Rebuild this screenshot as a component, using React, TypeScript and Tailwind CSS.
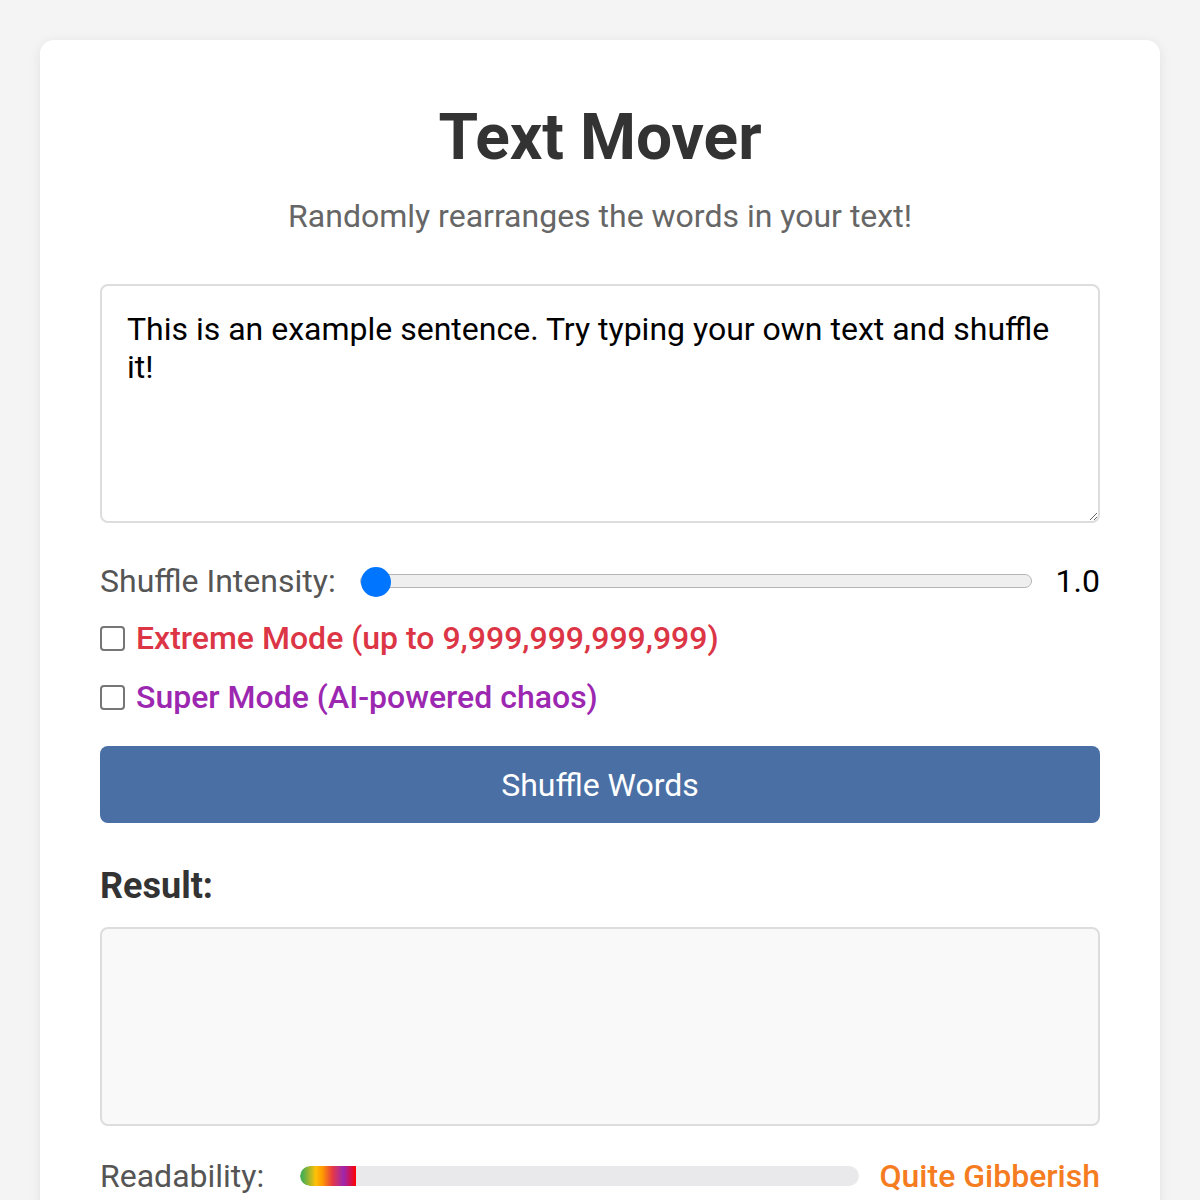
export default function App() {
  return (
    <div
      className="min-h-[1200px] bg-[#f4f4f4] pt-[40px] px-[40px]"
      style={{ fontFamily: "Roboto, 'Liberation Sans', sans-serif" }}
    >
      <div className="bg-white rounded-[14px] shadow-[0_2px_12px_rgba(0,0,0,0.08)] px-[60px] pt-[62px] pb-[60px]">
        <h1 className="text-center text-[64px] font-bold text-[#333] leading-[72px]">Text Mover</h1>
        <p className="text-center text-[32px] text-[#666] mt-[22px] leading-[40px]">
          Randomly rearranges the words in your text!
        </p>

        <textarea
          className="mt-[48px] block w-full h-[239px] border-2 border-[#ddd] rounded-[8px] px-[25px] pt-[24px] pb-[20px] text-[32px] leading-[38px] text-black outline-none resize-y"
          defaultValue="This is an example sentence. Try typing your own text and shuffle it!"
          style={{ fontFamily: "Roboto, 'Liberation Sans', sans-serif" }}
        />

        <div className="mt-[38px] flex items-center gap-[24px]">
          <span className="text-[32px] text-[#555] leading-[40px]">Shuffle Intensity:</span>
          <div className="relative flex-1 h-[32px] flex items-center">
            <div className="w-full h-[14px] rounded-full bg-[#efefef] border border-[#b5b5b5]" />
            <div className="absolute left-[1px] top-[2px] w-[30px] h-[30px] rounded-full bg-[#0075ff]" />
          </div>
          <span className="text-[32px] text-black leading-[40px]">1.0</span>
        </div>

        <label className="mt-[17px] flex items-center gap-[11px]">
          <span className="w-[25px] h-[25px] rounded-[4px] border-2 border-[#767676] bg-white" />
          <span className="text-[32px] font-medium text-[#dc3545] leading-[40px]">
            Extreme Mode (up to 9,999,999,999,999)
          </span>
        </label>
        <label className="mt-[19px] flex items-center gap-[11px]">
          <span className="w-[25px] h-[25px] rounded-[4px] border-2 border-[#767676] bg-white" />
          <span className="text-[32px] font-medium text-[#9c27b0] leading-[40px]">
            Super Mode (AI-powered chaos)
          </span>
        </label>

        <button className="mt-[29px] w-full h-[77px] rounded-[8px] bg-[#4a6fa5] text-white text-[32px]">
          Shuffle Words
        </button>

        <h3 className="mt-[43px] text-[36px] font-bold text-[#333] leading-[40px]">Result:</h3>
        <div className="mt-[21px] h-[199px] rounded-[8px] border-2 border-[#ddd] bg-[#f9f9f9]" />

        <div className="mt-[30px] flex items-center gap-[20px]">
          <span className="text-[32px] text-[#555] leading-[40px] w-[180px]">Readability:</span>
          <div className="flex-1 h-[20px] rounded-full bg-[#e9e9ec] overflow-hidden">
            <div className="h-full w-[56px] rounded-l-full bg-[linear-gradient(to_right,#4caf50_5%,#ffc107_28%,#ff9800_40%,#e53945_58%,#9c27b0_78%,#f00_100%)]" />
          </div>
          <span className="text-[32px] font-medium text-[#f57c20] leading-[40px]">Quite Gibberish</span>
        </div>
      </div>
    </div>
  );
}
